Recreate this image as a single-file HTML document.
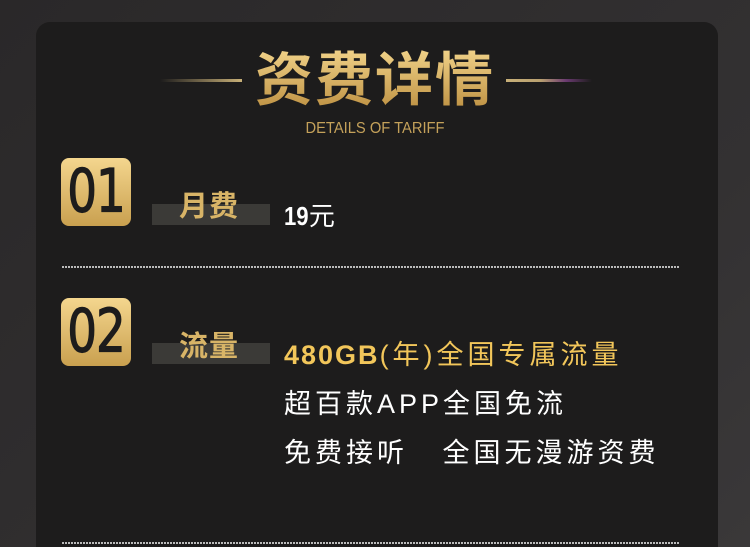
<!DOCTYPE html>
<html><head><meta charset="utf-8"><style>
*{margin:0;padding:0;box-sizing:border-box}
html,body{width:750px;height:547px;overflow:hidden}
body{background:linear-gradient(135deg,#2a2829 0%,#333132 70%,#3a3839 100%);position:relative;font-family:"Liberation Sans","Noto Sans CJK SC",sans-serif}
.card{position:absolute;left:36px;top:22px;width:682px;height:525px;background:#1d1c1c;border-radius:14px 14px 0 0}
.ab{position:absolute}
.title{left:0;width:750px;top:46px;text-align:center;font-size:58px;font-weight:bold;letter-spacing:2px;background:linear-gradient(#f3d58c,#b98b3c);-webkit-background-clip:text;background-clip:text;color:transparent;line-height:70px}
.sub{left:0;width:750px;top:120px;text-align:center;font-size:16px;color:#c4a15a;transform:scaleX(.92)}
.line{height:3px;top:79px}
.badge{width:70px;height:68px;border-radius:8px;background:linear-gradient(#f4d68e,#c9a04f);color:#1d1c1c;text-align:center;overflow:hidden}
.badge span{display:inline-block;font-size:52px;font-family:"DejaVu Sans Condensed","Liberation Sans Narrow",sans-serif;line-height:68px;letter-spacing:-1px;transform:scaleY(1.15);-webkit-text-stroke:1px #1d1c1c}
.bar{width:118px;height:21px;background:#3b3a37}
.lab{font-size:29px;font-weight:bold;color:#d8b467;letter-spacing:1px}
.txt{font-size:27px;letter-spacing:4px;color:#fff;white-space:nowrap}
.dot{left:62px;width:618px;height:2px;background:repeating-linear-gradient(90deg,#bbb 0 2px,transparent 2px 3px)}
</style></head><body>
<div class="card"></div>
<div class="ab line" style="left:160px;width:82px;background:linear-gradient(90deg,rgba(200,170,100,0),#c8b078)"></div>
<div class="ab line" style="left:506px;width:86px;background:linear-gradient(90deg,#c8b078,#b9a070 40%,#6a3a70 70%,rgba(90,40,90,0))"></div>
<div class="ab title">资费详情</div>
<div class="ab sub">DETAILS OF TARIFF</div>
<div class="ab badge" style="left:61px;top:158px"><span>01</span></div>
<div class="ab bar" style="left:152px;top:204px"></div>
<div class="ab lab" style="left:179px;top:183px">月费</div>
<div class="ab txt" style="left:284px;top:196px;font-weight:bold;letter-spacing:0;font-size:26px"><span style="display:inline-block;transform:scaleX(.85);transform-origin:left">19</span><span style="font-weight:normal;margin-left:-4px">元</span></div>
<div class="ab dot" style="top:266px"></div>
<div class="ab badge" style="left:61px;top:298px"><span>02</span></div>
<div class="ab bar" style="left:152px;top:343px"></div>
<div class="ab lab" style="left:179px;top:323px">流量</div>
<div class="ab txt" style="left:284px;top:333px;color:#f2c65a"><b style="letter-spacing:2px">480GB</b>(年)全国专属流量</div>
<div class="ab txt" style="left:284px;top:382px">超百款APP全国免流</div>
<div class="ab txt" style="left:284px;top:431px">免费接听&nbsp;&nbsp;&nbsp;全国无漫游资费</div>
<div class="ab dot" style="top:542px"></div>
</body></html>
